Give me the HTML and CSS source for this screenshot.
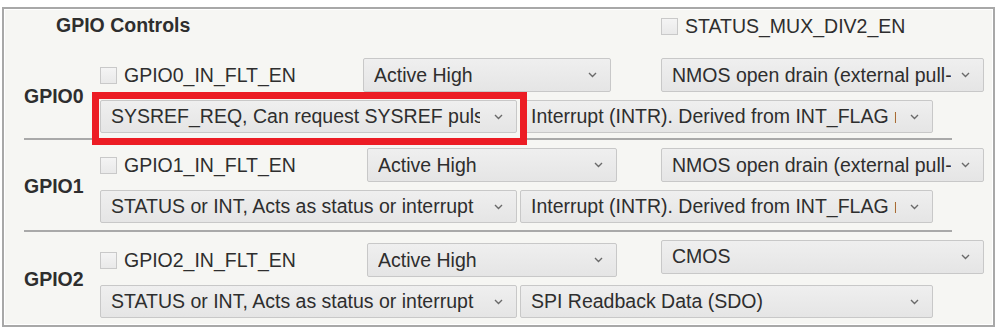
FILE: index.html
```html
<!DOCTYPE html>
<html lang="en">
<head>
    <meta charset="UTF-8">
    <meta name="viewport" content="width=device-width, initial-scale=1.0">
    <title>GPIO Controls</title>
    <link rel="stylesheet" href="styles.css">
</head>
<body>
    <div class="panel">
        <div class="panel-header">
            <div class="panel-title">GPIO Controls</div>
            <label class="check check-status"><span class="box"></span>STATUS_MUX_DIV2_EN</label>
        </div>

        <div class="gpio">
            <div class="gpio-name">GPIO0</div>
            <div class="gpio-body">
                <div class="row">
                    <label class="check"><span class="box"></span>GPIO0_IN_FLT_EN</label>
                    <div class="select select-pol"><span class="value">Active High</span><svg class="chev" viewBox="0 0 9 6"><polyline points="1,1 4.5,4.5 8,1"/></svg></div>
                    <div class="select select-drive"><span class="value">NMOS open drain (external pull-up)</span><svg class="chev" viewBox="0 0 9 6"><polyline points="1,1 4.5,4.5 8,1"/></svg></div>
                </div>
                <div class="row row-bottom">
                    <div class="select select-mode highlight"><span class="value">SYSREF_REQ, Can request SYSREF pulse</span><svg class="chev" viewBox="0 0 9 6"><polyline points="1,1 4.5,4.5 8,1"/></svg></div>
                    <div class="select select-src"><span class="value">Interrupt (INTR). Derived from INT_FLAG register</span><svg class="chev" viewBox="0 0 9 6"><polyline points="1,1 4.5,4.5 8,1"/></svg></div>
                </div>
            </div>
        </div>
        <div class="divider"></div>

        <div class="gpio gpio-shift">
            <div class="gpio-name">GPIO1</div>
            <div class="gpio-body">
                <div class="row">
                    <label class="check"><span class="box"></span>GPIO1_IN_FLT_EN</label>
                    <div class="select select-pol"><span class="value">Active High</span><svg class="chev" viewBox="0 0 9 6"><polyline points="1,1 4.5,4.5 8,1"/></svg></div>
                    <div class="select select-drive"><span class="value">NMOS open drain (external pull-up)</span><svg class="chev" viewBox="0 0 9 6"><polyline points="1,1 4.5,4.5 8,1"/></svg></div>
                </div>
                <div class="row row-bottom">
                    <div class="select select-mode"><span class="value">STATUS or INT, Acts as status or interrupt</span><svg class="chev" viewBox="0 0 9 6"><polyline points="1,1 4.5,4.5 8,1"/></svg></div>
                    <div class="select select-src"><span class="value">Interrupt (INTR). Derived from INT_FLAG register</span><svg class="chev" viewBox="0 0 9 6"><polyline points="1,1 4.5,4.5 8,1"/></svg></div>
                </div>
            </div>
        </div>
        <div class="divider divider-low"></div>

        <div class="gpio gpio-shift">
            <div class="gpio-name">GPIO2</div>
            <div class="gpio-body">
                <div class="row row-low">
                    <label class="check"><span class="box"></span>GPIO2_IN_FLT_EN</label>
                    <div class="select select-pol"><span class="value">Active High</span><svg class="chev" viewBox="0 0 9 6"><polyline points="1,1 4.5,4.5 8,1"/></svg></div>
                    <div class="select select-drive select-up"><span class="value">CMOS</span><svg class="chev" viewBox="0 0 9 6"><polyline points="1,1 4.5,4.5 8,1"/></svg></div>
                </div>
                <div class="row row-bottom">
                    <div class="select select-mode"><span class="value">STATUS or INT, Acts as status or interrupt</span><svg class="chev" viewBox="0 0 9 6"><polyline points="1,1 4.5,4.5 8,1"/></svg></div>
                    <div class="select select-src"><span class="value">SPI Readback Data (SDO)</span><svg class="chev" viewBox="0 0 9 6"><polyline points="1,1 4.5,4.5 8,1"/></svg></div>
                </div>
            </div>
        </div>
    </div>
</body>
</html>
```

FILE: styles.css
```css
body {
    margin: 0;
    background: #fff;
    font-family: "Liberation Sans", Arial, sans-serif;
    font-size: 19.5px;
    color: #2e2e2e;
}
.panel {
    box-sizing: border-box;
    width: 993px;
    height: 320px;
    margin: 7px 0 0 2px;
    padding: 0 9px 0 20px;
    background: #f6f6f3;
    border: 2px solid #a8a8a8;
    box-shadow: inset 0 0 0 1px #fff;
}
.panel-header {
    display: flex;
    align-items: flex-start;
    height: 41px;
    padding-top: 5px;
    box-sizing: border-box;
}
.panel-title {
    margin-left: 32px;
    font-weight: bold;
    line-height: 22px;
}
.check {
    display: flex;
    align-items: center;
    line-height: 22px;
    white-space: nowrap;
}
.check .box {
    box-sizing: border-box;
    width: 17px;
    height: 17px;
    margin-right: 7px;
    border: 1px solid #c9c9c9;
    background: linear-gradient(#f4f4f4, #e9e9e9);
}
.check-status {
    margin-left: auto;
    width: 323px;
    padding-top: 1px;
}
.gpio {
    display: flex;
    align-items: center;
    padding-top: 8px;
}
.gpio-name {
    width: 76px;
    font-weight: bold;
    line-height: 22px;
}
.gpio-body {
    display: flex;
    flex-direction: column;
    gap: 8px;
}
.row {
    display: flex;
    align-items: center;
    height: 34px;
}
.row .check {
    width: 263px;
}
.row-low {
    margin-top: 3px;
}
.row-bottom {
    height: 33px;
    gap: 3px;
}
.select {
    box-sizing: border-box;
    display: flex;
    align-items: center;
    height: 34px;
    padding-left: 10px;
    border: 1px solid #c8c8c8;
    border-radius: 2px;
    background: linear-gradient(#efefef, #e5e5e5);
    white-space: nowrap;
}
.row-bottom .select {
    height: 33px;
}
.select .value {
    flex: 1;
    min-width: 0;
    overflow: hidden;
}
.select .chev {
    width: 9px;
    height: 6px;
    margin: 0 13px 0 14px;
    fill: none;
    stroke: #6a6a6a;
    stroke-width: 1.4;
}
.select-pol {
    width: 248px;
}
.select-drive {
    width: 323px;
    margin-left: 50px;
}
.select-drive .chev {
    margin-left: 10px;
}
.select-up {
    margin-top: -7px;
}
.gpio-shift .row .check {
    width: 267px;
}
.gpio-shift .select-pol {
    width: 250px;
}
.gpio-shift .select-drive {
    margin-left: 44px;
}
.select-mode {
    width: 417px;
}
.select-src {
    width: 413px;
}
.highlight {
    position: relative;
}
.highlight::after {
    content: "";
    position: absolute;
    top: -9px;
    left: -9px;
    right: -11px;
    bottom: -13px;
    border: 7px solid #ec1c24;
    z-index: 1;
}
.divider {
    width: 928px;
    height: 2px;
    margin-top: 5px;
    background: #a9a9a9;
}
.divider-low {
    margin-top: 7px;
}
```
